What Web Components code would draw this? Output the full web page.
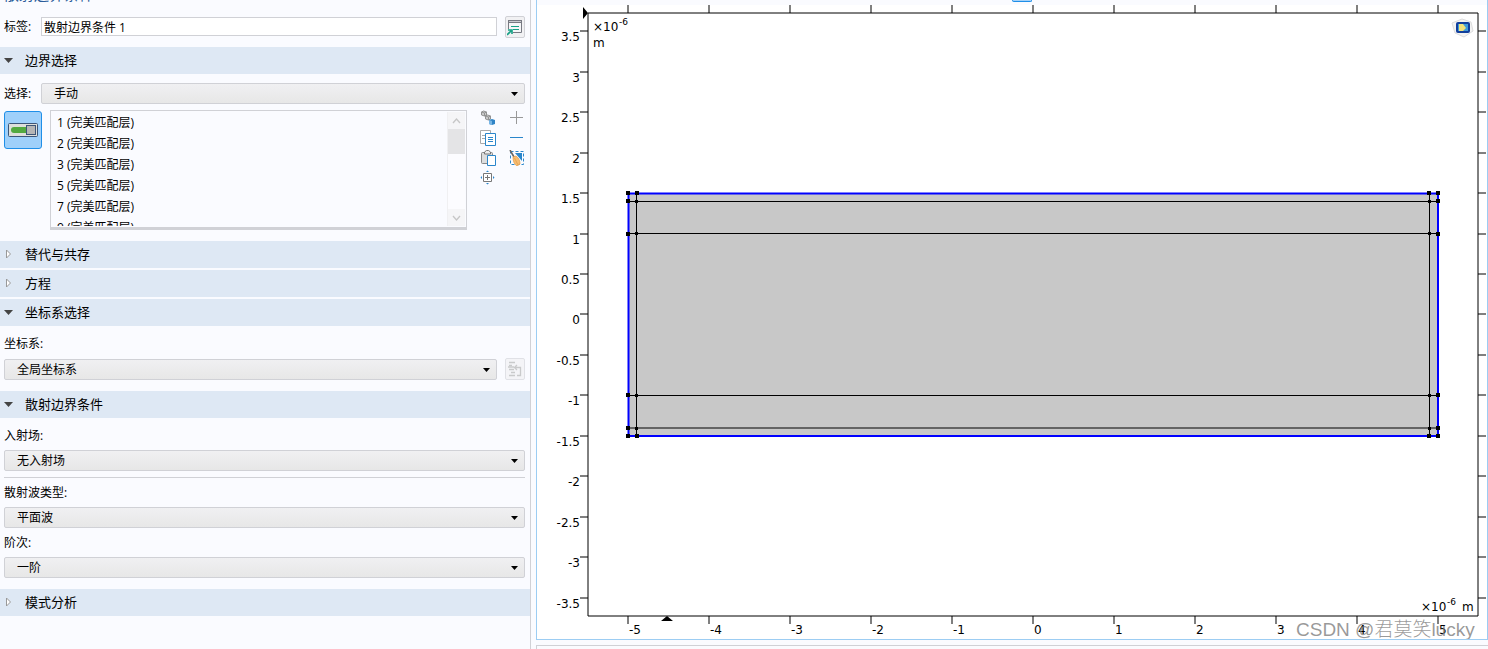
<!DOCTYPE html>
<html lang="zh-CN">
<head>
<meta charset="utf-8">
<title>散射边界条件</title>
<style>
  body {
    margin: 0;
    font: 12px/18px "Open Sans", "Noto Sans CJK SC", sans-serif;
    color: #000;
    --panel: #fafbff;
    --head: #dee8f4;
    --line: #d0d1d6;
    --focus: #9ccdf3;
    --accent: #1f8fe8;
    background: #fafbff;
  }
</style>
</head>
<body>
<app-shell>
  <settings-panel slot="settings"></settings-panel>
  <model-plot slot="graphics"></model-plot>
</app-shell>

<script>
const define = (name, html, setup) => {
  const template = document.createElement('template');
  template.innerHTML = html;
  customElements.define(name, class extends HTMLElement {
    connectedCallback() {
      if (this.shadowRoot) return;
      this.attachShadow({ mode: 'open' }).append(template.content.cloneNode(true));
      if (setup) setup(this, this.shadowRoot);
    }
  });
};

define('app-shell', `
<style>
  :host { display: grid; grid-template-columns: minmax(0, 531fr) minmax(0, 957fr); height: 100vh; overflow: hidden; }
  .left { border-right: 1px solid var(--line); overflow: hidden; }
  .right { display: flex; flex-direction: column; gap: 5px; padding-left: 5px; min-width: 0; min-height: 0; }
  .graph { flex: 1; min-height: 0; display: flex; flex-direction: column; border: solid var(--focus); border-width: 0 1px 1px; background: #fff; }
  .tools { height: 5px; flex: none; display: flex; justify-content: center; background: var(--panel); }
  .tools button { width: 20px; height: 2px; padding: 0; border: solid var(--accent); border-width: 0 1px 1px; border-radius: 0 0 3px 3px; background: #a3d1f8; margin-left: 20px; }
  .next { height: 3px; flex: none; border: solid var(--line); border-width: 1px 0 0 1px; }
</style>
<div class="left"><slot name="settings"></slot></div>
<div class="right">
  <div class="graph">
    <div class="tools"><button aria-label="视图"></button></div>
    <slot name="graphics"></slot>
  </div>
  <div class="next"></div>
</div>`);

define('panel-section', `
<style>
  :host { display: block; margin-top: 2px; }
  h2 { margin: 0; font-weight: 400; }
  button { width: 100%; height: 27px; display: flex; align-items: center; padding: 0 4px 2px; border: 0; background: var(--head); font: inherit; font-size: 13px; line-height: 20px; color: #000; }
  svg { width: 9px; height: 10px; margin-right: 12px; }
  .shut, :host([open]) .open { display: block; }
  .open, :host([open]) .shut, .body { display: none; }
  :host([open]) .body { display: block; padding: 9px 5px 9px 4px; }
</style>
<h2><button>
  <svg class="open" viewBox="0 0 9 10"><path d="M0 3h9L4.500 8z" fill="#444"/></svg>
  <svg class="shut" viewBox="0 0 9 10"><path d="M2.500 1v8L6.500 5z" fill="#fff" stroke="#999"/></svg>
  <span></span>
</button></h2>
<div class="body"><slot></slot></div>`, (el, root) => {
  root.querySelector('span').textContent = el.getAttribute('heading');
  root.querySelector('button').addEventListener('click', () => el.toggleAttribute('open'));
});

define('field-select', `
<style>
  :host { display: block; }
  label { display: block; height: 18px; margin-bottom: 5px; }
  .row { display: flex; align-items: end; gap: 8px; }
  .box { flex: 1; display: grid; align-items: center; }
  .box > * { grid-area: 1 / 1; }
  select { appearance: none; width: 100%; height: 21px; padding: 0 20px 0 12px; border: 1px solid var(--line); border-radius: 2px; background: linear-gradient(#f0f0f2, #e7e7e7); font: inherit; line-height: 18px; color: #000; }
  svg { width: 7px; height: 4px; justify-self: end; margin-right: 7px; pointer-events: none; }
  :host([inline]) { display: flex; align-items: center; }
  :host([inline]) label { width: 37px; margin: 0; }
  :host([inline]) .row { flex: 1; }
</style>
<label for="s"></label>
<div class="row">
  <div class="box">
    <select id="s"><option></option></select>
    <svg viewBox="0 0 7 4"><path d="M0 0h7L3.500 4z"/></svg>
  </div>
  <slot></slot>
</div>`, (el, root) => {
  root.querySelector('label').textContent = el.getAttribute('label');
  root.querySelector('option').textContent = el.getAttribute('value');
});

define('tool-button', `
<style>
  :host { display: block; flex: none; }
  button { display: grid; place-items: center; width: 16px; height: 16px; padding: 0; border: 0; background: none; }
  :host([framed]) button { width: 20px; height: 22px; border: 1px solid var(--line); border-radius: 2px; background: #f1f1f3; }
  :host([disabled]) button { opacity: .6; }
</style>
<button><slot></slot></button>`, (el, root) => {
  const button = root.querySelector('button');
  button.setAttribute('aria-label', el.getAttribute('label'));
  button.disabled = el.hasAttribute('disabled');
});

define('entity-list', `
<style>
  :host { flex: 1; min-width: 0; height: 116px; display: flex; border: 1px solid var(--line); border-bottom-width: 3px; }
  ul { flex: 1; height: 114px; margin: 1px 0 0; padding: 0 0 0 6px; list-style: none; overflow: hidden; }
  li { height: 21px; line-height: 21px; white-space: nowrap; }
  .bar { width: 17px; margin: 1px 1px 1px 0; display: flex; flex-direction: column; background: #fcfcff; box-shadow: -1px 0 #f0f0f2; }
  button { width: 17px; height: 17px; padding: 0; border: 0; background: #f5f5f7; display: grid; place-items: center; }
  .thumb { height: 25px; background: #e4e4e6; }
  .bar button:last-child { margin-top: auto; }
  path { fill: none; stroke: #c6c6c6; stroke-width: 1.300; }
</style>
<ul role="listbox" aria-label="边界"></ul>
<div class="bar">
  <button aria-label="向上"><svg width="9" height="6"><path d="M1 5l3.500-4L8 5"/></svg></button>
  <div class="thumb"></div>
  <button aria-label="向下"><svg width="9" height="6"><path d="M1 1l3.500 4L8 1"/></svg></button>
</div>`, (el, root) => {
  const list = root.querySelector('ul');
  for (const id of [1, 2, 3, 5, 7, 9]) {
    const item = document.createElement('li');
    item.setAttribute('role', 'option');
    item.textContent = id + ' (完美匹配层)';
    list.append(item);
  }
  const [up, down] = root.querySelectorAll('button');
  up.addEventListener('click', () => { list.scrollTop -= 21; });
  down.addEventListener('click', () => { list.scrollTop += 21; });
});

define('settings-panel', `
<style>
  :host { display: block; }
  h1 { margin: -17px 0 11px 4px; font-size: 15px; line-height: 22px; font-weight: 400; color: #2b5c9a; }
  .name { display: flex; align-items: start; margin: 0 5px 9px 4px; }
  .name label { width: 37px; line-height: 22px; }
  .name input { flex: 1; min-width: 0; box-sizing: border-box; height: 19px; margin: 1px 8px 0 0; padding: 0 2px; border: 1px solid var(--line); background: #fff; font: inherit; color: #000; }
  .first { margin-top: 0; }
  .pick { display: flex; margin-top: 6px; align-items: start; }
  .active { width: 38px; height: 38px; margin: 1px 8px 0 0; padding: 0; display: grid; place-items: center; border: 1px solid var(--accent); border-radius: 3px; background: #9fd0fa; box-sizing: border-box; }
  .icons { display: grid; grid-template-columns: 16px 16px; grid-auto-rows: 16px; gap: 4px 13px; margin-left: 13px; }
  .icons .low { grid-column: 1; }
  hr { margin: 6px 0 6px; border: 0; border-top: 1px solid var(--line); }
  .gap { margin-top: 6px; }
  .tail { padding-bottom: 2px; }
</style>
<h1>散射边界条件</h1>
<div class="name">
  <label for="name">标签:</label><input id="name" value="散射边界条件 1">
  <tool-button framed label="重命名">
    <svg width="16" height="18" viewBox="0 0 16 18"><path d="M1.500 11V2.500h13v12H6" fill="#f5f6f8" stroke="#777982"/><path d="M1 2h14v3H1z" fill="#777982"/><path d="M2 3h12v1H2z" fill="#c9cad0"/><path d="M4 8.500h8M6 11.500h6" stroke="#16a085"/><path d="M0 17l4-4M1 12h4v4" fill="none" stroke="#16a085" stroke-width="1.600"/></svg>
  </tool-button>
</div>

<panel-section class="first" heading="边界选择" open>
  <div class="tail">
    <field-select inline label="选择:" value="手动"></field-select>
    <div class="pick">
      <button class="active" aria-label="激活选择" aria-pressed="true">
        <svg width="30" height="14" viewBox="0 0 30 14"><rect x=".5" y=".5" width="29" height="13" rx="1" fill="#dedfda" stroke="#3d5578"/><path d="M6 4h12v6H6a3 3 0 0 1 0-6z" fill="#53a93f"/><rect x="18.500" y="2.500" width="9" height="9" fill="#b5b5b5" stroke="#3d5578"/></svg>
      </button>
      <entity-list></entity-list>
      <div class="icons">
        <tool-button label="创建选择"><svg width="16" height="16" viewBox="0 0 16 16"><g fill="#ccc" stroke="#929292"><path d="M1.500 2l2-1 3 1v3l-2 1-3-1z"/><path d="M5.500 6l2-1 3 1v3l-2 1-3-1z"/><path d="M1.500 2l3 1 2-1M4.500 3v3M5.500 6l3 1 2-1M8.500 7v3"/></g><path d="M9 10l3-1 3 1v4l-3 1-3-1z" fill="#2f84c6"/><path d="M9 10l3 1v4l-3-1z" fill="#78b5e4"/></svg></tool-button>
        <tool-button label="添加"><svg width="16" height="16" viewBox="0 0 16 16"><path d="M1 7.500h13M7.500 1v13" stroke="#999"/></svg></tool-button>
        <tool-button label="复制"><svg width="16" height="16" viewBox="0 0 16 16"><path d="M.5.500h10v13H.5z" fill="#fff" stroke="#aaa"/><path d="M2 5.500h3M2 8.500h3" stroke="#aaa"/><path d="M5.500 3.500h10v12h-10z" fill="#fff" stroke="#2a86cb"/><path d="M8 7.500h5M8 9.500h5M8 11.500h5" stroke="#2a86cb"/></svg></tool-button>
        <tool-button label="移除"><svg width="16" height="16" viewBox="0 0 16 16"><path d="M1 7.500h13" stroke="#2a86cb"/></svg></tool-button>
        <tool-button label="粘贴"><svg width="16" height="16" viewBox="0 0 16 16"><rect x="1.500" y="2.500" width="11" height="11" rx="1" fill="#ddd" stroke="#888"/><path d="M4.500 4V2l2-1.500h2L10.500 2v2z" fill="#eee" stroke="#777"/><path d="M7.500 5.500h8v10h-8z" fill="#fff" stroke="#2a86cb"/></svg></tool-button>
        <tool-button label="清除选择"><svg width="16" height="16" viewBox="0 0 16 16"><path d="M1.500 1.500h13v13h-13z" fill="none" stroke="#2a86cb" stroke-dasharray="3 2"/><path d="M6 3h7v8z" fill="#2a86cb"/><path d="M1 0l4 7" stroke="#666" stroke-width="1.600"/><path d="M4 7l3-1c3 2 4 5 4 8l-3 2c-3-2-4-5-4-9z" fill="#f7bd72" stroke="#e39a43" stroke-width=".7"/><path d="M5.500 8l3.500 7" stroke="#dc9440" stroke-width=".6"/></svg></tool-button>
        <tool-button class="low" label="缩放到选择"><svg width="16" height="16" viewBox="0 0 16 16"><path d="M3.500 3.500h8v8h-8z" fill="#fff" stroke="#777"/><path d="M5 7.500h5M7.500 5v5" stroke="#777"/><path d="M6 2l1.500-1.500L9 2zM6 13l1.500 1.500L9 13zM2 6L.5 7.500 2 9zM13 6l1.500 1.500L13 9z" fill="#2a86cb"/></svg></tool-button>
      </div>
    </div>
  </div>
</panel-section>
<panel-section class="first" heading="替代与共存"></panel-section>
<panel-section heading="方程"></panel-section>
<panel-section heading="坐标系选择" open>
  <div class="tail">
    <field-select label="坐标系:" value="全局坐标系">
      <tool-button framed disabled label="转到源">
        <svg width="14" height="16" viewBox="0 0 14 16"><path d="M1 1.500h6M1 4.500h3M1 8.500h5M3 11.500h4M1 14.500h6" stroke="#aaa" stroke-width="1.300"/><path d="M0 6h6M7 6.500h5.500v8H9M9 4L6.500 6.500 9 9" fill="none" stroke="#aaa" stroke-width="1.300"/></svg>
      </tool-button>
    </field-select>
  </div>
</panel-section>
<panel-section class="first" heading="散射边界条件" open>
  <div class="tail">
    <field-select label="入射场:" value="无入射场"></field-select>
    <hr>
    <field-select label="散射波类型:" value="平面波"></field-select>
    <field-select class="gap" label="阶次:" value="一阶"></field-select>
  </div>
</panel-section>
<panel-section class="first" heading="模式分析"></panel-section>`);

define('model-plot', `
<style>
  :host { display: block; flex: 1; min-height: 0; }
  svg { display: block; width: 100%; height: 100%; }
  text { font: 12px "DejaVu Sans", sans-serif; }
  .sup { font-size: 9px; }
  .end { text-anchor: end; }
  .axis { fill: none; stroke: #000; }
  .mark { font: 19px "Liberation Sans", "Noto Sans CJK SC", sans-serif; font-weight: 300; fill: #777; fill-opacity: .75; }
</style>
<svg viewBox="537 5 950 634" role="img" aria-label="几何图形">
  <path id="axes" class="axis"/>
  <path d="M583 7l5 6-5 6zM661 621l6-5 6 5z"/>
  <path d="M628.500 193.500h809.500v242.500h-809.500z" fill="#c8c8c8"/>
  <path class="axis" d="M636.500 193v243M1429.500 193v243M628 201.500h810M628 233.500h810M628 395.500h810M628 428h810"/>
  <path d="M628.500 193.500h809.500v242.500h-809.500z" fill="none" stroke="#00f" stroke-width="2"/>
  <path id="nodes"/>
  <g id="labels"></g>
  <text x="593" y="31">×10</text><text class="sup" x="619" y="25">-6</text>
  <text x="593" y="47">m</text>
  <text x="1421" y="611">×10</text><text class="sup" x="1447" y="605">-6</text>
  <text x="1462" y="611">m</text>
  <g>
    <path d="M1452 23l10-4 9 3 2 9-9 6-9-4z" fill="#f3f3f3" stroke="#ddd"/>
    <rect x="1456" y="22" width="14" height="11" rx="2" fill="#123f9c"/>
    <rect x="1458" y="24" width="10" height="7" fill="#3f9bd8"/>
    <path d="M1459 24h4l3 4-3 3h-4z" fill="#f2e27a"/>
  </g>
  <text class="mark" x="1296" y="636">CSDN @君莫笑lucky</text>
</svg>`, (el, root) => {
  const labels = root.getElementById('labels');
  const label = (x, y, value, cls) => {
    const t = document.createElementNS('http://www.w3.org/2000/svg', 'text');
    t.setAttribute('x', x);
    t.setAttribute('y', y);
    t.setAttribute('class', cls);
    t.textContent = value;
    labels.append(t);
  };
  let axes = 'M588 13H1478V616H588z';
  for (let v = -5; v <= 5; v++) {
    const x = 1033 + v * 81;
    axes += `M${x} 5v8M${x} 616v8`;
    label(x + 1, 634, v, '');
  }
  for (let v = -3.5; v <= 3.5; v += 0.5) {
    const exact = 314.5 - v * 81;
    const y = v > 0 ? Math.round(exact) : Math.floor(exact);
    axes += `M580 ${y}h8M1478 ${y}h8`;
    label(580, y + 10, v, 'end');
  }
  root.getElementById('axes').setAttribute('d', axes);
  let nodes = '';
  for (const y of [193, 201, 234, 395, 428, 436]) {
    for (const x of [628, 637, 1429, 1438]) {
      const inner = (x === 637 || x === 1429) && y !== 193 && y !== 436;
      nodes += inner ? `M${x === 637 ? 635 : 1428} ${y === 234 ? 232 : y - 1}h3v3h-3z` : `M${x - 2} ${y - 2}h4v4h-4z`;
    }
  }
  root.getElementById('nodes').setAttribute('d', nodes);
});
</script>
</body>
</html>
